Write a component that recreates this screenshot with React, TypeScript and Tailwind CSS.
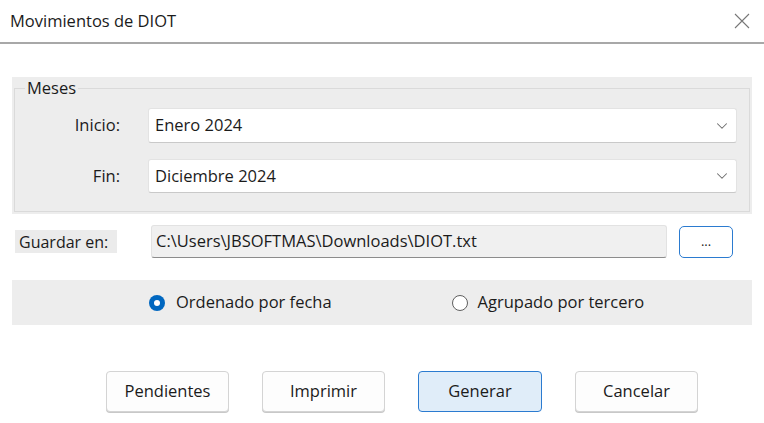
import { ChevronDown } from "lucide-react";

const font = { fontFamily: '"Open Sans", "Noto Sans", sans-serif' };

function Combo({ value }: { value: string }) {
  return (
    <div className="flex h-full flex-1 items-center justify-between rounded-[3px] border border-[#e3e3e3] border-b-[#c9c9c9] bg-white pl-[6px] pr-[5px] text-[16.5px] text-[#1b1b1b]">
      <span>{value}</span>
      <ChevronDown className="h-[18px] w-[18px] text-[#6b6b6b]" strokeWidth={1.4} />
    </div>
  );
}

function Btn({ label, primary }: { label: string; primary?: boolean }) {
  return (
    <button
      className={
        primary
          ? "h-[41px] w-[124px] rounded-[4px] border-[1.5px] border-[#2b7bd0] bg-[#e0edf9] text-[16.5px] text-[#1b1b1b]"
          : "h-[41px] w-[123px] rounded-[4px] border border-[#d4d4d4] bg-[#fdfdfd] text-[16.5px] text-[#1b1b1b] shadow-[0_1px_0_#c8c8c8]"
      }
    >
      {label}
    </button>
  );
}

export default function App() {
  return (
    <div className="h-[423px] w-[764px] overflow-hidden bg-white" style={font}>
      <div className="flex h-[42px] items-center justify-between pl-[10px] pr-[14px]">
        <span className="text-[16.5px] text-[#1b1b1b]">Movimientos de DIOT</span>
        <svg width="16" height="16" viewBox="0 0 16 16" className="text-[#777]">
          <path d="M1 1L15 15M15 1L1 15" stroke="currentColor" strokeWidth="1.1" />
        </svg>
      </div>
      <div className="h-[2px] bg-[#a8a8a8]" />

      <div className="mx-[12px] mt-[33px] h-[137px] bg-[#ededed] px-[2px] pb-[2px]">
        <fieldset className="h-full border border-[#dadada] px-0 pb-0">
          <legend className="ml-[10px] px-[2px] text-[16.5px] leading-[22px] text-[#1b1b1b]">Meses</legend>
          <div className="mt-[9px] flex h-[35px] items-center pr-[12px]">
            <span className="w-[105px] text-right text-[16.5px] text-[#1b1b1b]">Inicio:</span>
            <div className="ml-[28px] flex h-full flex-1">
              <Combo value="Enero 2024" />
            </div>
          </div>
          <div className="mt-[16px] flex h-[34px] items-center pr-[12px]">
            <span className="w-[105px] text-right text-[16.5px] text-[#1b1b1b]">Fin:</span>
            <div className="ml-[28px] flex h-full flex-1">
              <Combo value="Diciembre 2024" />
            </div>
          </div>
        </fieldset>
      </div>

      <div className="mt-[11px] flex h-[33px] items-center pl-[15px]">
        <span className="flex h-[23px] w-[102px] items-center whitespace-nowrap bg-[#ebebeb] pl-[4px] text-[16px] text-[#1b1b1b]">
          Guardar en:
        </span>
        <div className="ml-[34px] flex h-full w-[516px] items-center rounded-[3px] border border-[#e2e2e2] border-b-[#8c8c8c] bg-[#f0f0f0] pl-[4px] text-[16.5px] text-[#1b1b1b]">
          C:\Users\JBSOFTMAS\Downloads\DIOT.txt
        </div>
        <button className="ml-[12px] flex h-[32px] w-[54px] items-start justify-center rounded-[5px] border-[1.5px] border-[#2b7bd0] bg-white pt-[5px] text-[13px] text-[#1b1b1b]">
          ...
        </button>
      </div>

      <div className="mx-[12px] mt-[22px] flex h-[45px] items-center bg-[#ededed]">
        <div className="ml-[137px] flex items-center gap-[11px]">
          <span className="flex h-[16px] w-[16px] items-center justify-center rounded-full bg-[#0067c0]">
            <span className="h-[6px] w-[6px] rounded-full bg-white" />
          </span>
          <span className="text-[16.5px] text-[#1b1b1b]">Ordenado por fecha</span>
        </div>
        <div className="ml-[120px] flex items-center gap-[10px]">
          <span className="h-[16px] w-[16px] rounded-full border border-[#5f5f5f] bg-white" />
          <span className="text-[16.5px] text-[#1b1b1b]">Agrupado por tercero</span>
        </div>
      </div>

      <div className="mt-[46px] flex gap-[33px] pl-[106px]">
        <Btn label="Pendientes" />
        <Btn label="Imprimir" />
        <Btn label="Generar" primary />
        <Btn label="Cancelar" />
      </div>
    </div>
  );
}
